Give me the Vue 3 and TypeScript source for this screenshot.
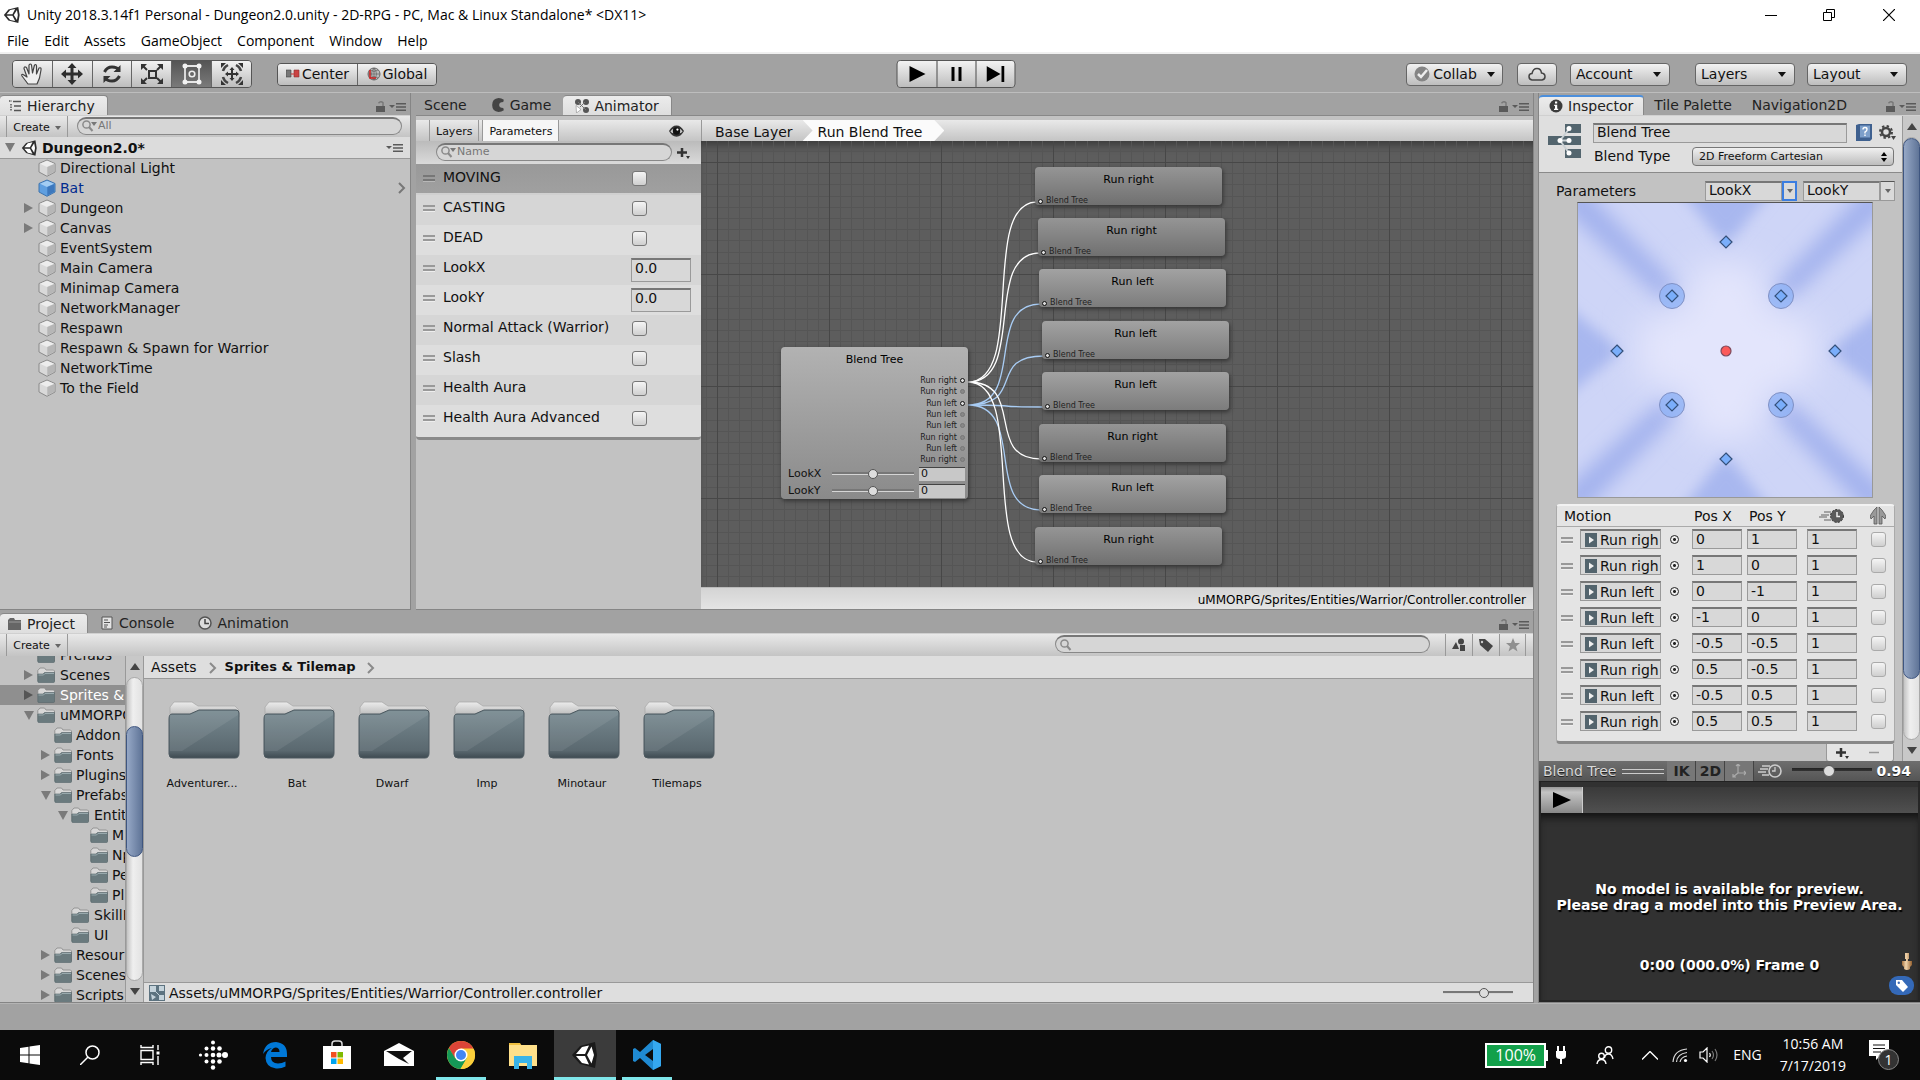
<script setup lang="ts">
interface TreeRow { name: string; level: number; fold?: 'open' | 'closed'; selected?: boolean }
interface SceneRow { name: string; fold?: boolean; prefab?: boolean }
interface Param { name: string; kind: 'bool' | 'float' }
interface GraphNode { label: string; x: number; y: number; left: boolean }
interface Motion { name: string; x: string; y: string }

const menus = ['File', 'Edit', 'Assets', 'GameObject', 'Component', 'Window', 'Help']
const tools = ['hand', 'move', 'rotate', 'scale', 'rect', 'transform']

const sceneRows: SceneRow[] = [
  { name: 'Directional Light' },
  { name: 'Bat', prefab: true },
  { name: 'Dungeon', fold: true },
  { name: 'Canvas', fold: true },
  { name: 'EventSystem' },
  { name: 'Main Camera' },
  { name: 'Minimap Camera' },
  { name: 'NetworkManager' },
  { name: 'Respawn' },
  { name: 'Respawn & Spawn for Warrior' },
  { name: 'NetworkTime' },
  { name: 'To the Field' },
]

const params: Param[] = [
  { name: 'MOVING', kind: 'bool' },
  { name: 'CASTING', kind: 'bool' },
  { name: 'DEAD', kind: 'bool' },
  { name: 'LookX', kind: 'float' },
  { name: 'LookY', kind: 'float' },
  { name: 'Normal Attack (Warrior)', kind: 'bool' },
  { name: 'Slash', kind: 'bool' },
  { name: 'Health Aura', kind: 'bool' },
  { name: 'Health Aura Advanced', kind: 'bool' },
]

// Node positions are in graph-canvas coordinates.
const nodes: GraphNode[] = [
  { label: 'Run right', x: 334, y: 26, left: false },
  { label: 'Run right', x: 337, y: 77, left: false },
  { label: 'Run left', x: 338, y: 128, left: true },
  { label: 'Run left', x: 341, y: 180, left: true },
  { label: 'Run left', x: 341, y: 231, left: true },
  { label: 'Run right', x: 338, y: 283, left: false },
  { label: 'Run left', x: 338, y: 334, left: true },
  { label: 'Run right', x: 334, y: 386, left: false },
]
const outputs = ['Run right', 'Run right', 'Run left', 'Run left', 'Run left', 'Run right', 'Run left', 'Run right']

function wire(n: GraphNode): string {
  const y0 = n.left ? 264 : 241
  const x1 = n.x + 2
  const y1 = n.y + 35
  return `M267 ${y0} C 326 ${y0} ${x1 - 58} ${y1} ${x1} ${y1}`
}

const motions: Motion[] = [
  { name: 'Run righ', x: '0', y: '1' },
  { name: 'Run righ', x: '1', y: '0' },
  { name: 'Run left', x: '0', y: '-1' },
  { name: 'Run left', x: '-1', y: '0' },
  { name: 'Run left', x: '-0.5', y: '-0.5' },
  { name: 'Run righ', x: '0.5', y: '-0.5' },
  { name: 'Run left', x: '-0.5', y: '0.5' },
  { name: 'Run righ', x: '0.5', y: '0.5' },
]
const samples = [
  [148, 39, 0], [39, 148, 0], [257, 148, 0], [148, 256, 0],
  [94, 93, 1], [203, 93, 1], [94, 202, 1], [203, 202, 1],
]

const tree: TreeRow[] = [
  { name: 'Prefabs', level: 1 },
  { name: 'Scenes', level: 1, fold: 'closed' },
  { name: 'Sprites &', level: 1, fold: 'closed', selected: true },
  { name: 'uMMORPG', level: 1, fold: 'open' },
  { name: 'Addon', level: 2 },
  { name: 'Fonts', level: 2, fold: 'closed' },
  { name: 'Plugins', level: 2, fold: 'closed' },
  { name: 'Prefabs', level: 2, fold: 'open' },
  { name: 'Entit', level: 3, fold: 'open' },
  { name: 'M', level: 4 },
  { name: 'Np', level: 4 },
  { name: 'Pe', level: 4 },
  { name: 'Pl', level: 4 },
  { name: 'SkillE', level: 3 },
  { name: 'UI', level: 3 },
  { name: 'Resour', level: 2, fold: 'closed' },
  { name: 'Scenes', level: 2, fold: 'closed' },
  { name: 'Scripts', level: 2, fold: 'closed' },
]
const folders = ['Adventurer...', 'Bat', 'Dwarf', 'Imp', 'Minotaur', 'Tilemaps']
const apps = ['fit', 'edge', 'store', 'mail', 'chrome', 'explorer', 'unityw', 'code']
const running = ['chrome', 'unityw', 'code']
</script>

<template>
  <div class="app">
    <svg class="defs" aria-hidden="true">
      <defs>
        <linearGradient id="gFolder" x1="0" y1="0" x2="0" y2="1"><stop offset="0" stop-color="#778990" /><stop offset="0.85" stop-color="#5a686f" /><stop offset="1" stop-color="#3e4a51" /></linearGradient>
        <linearGradient id="gPaper" x1="0" y1="0" x2="0" y2="1"><stop offset="0" stop-color="#ececec" /><stop offset="1" stop-color="#b4b4b4" /></linearGradient>
        <linearGradient id="gCyl" x1="0" y1="0" x2="1" y2="0"><stop offset="0" stop-color="#a5713f" /><stop offset="0.4" stop-color="#f2d6ae" /><stop offset="1" stop-color="#94602f" /></linearGradient>
        <filter id="edgeSoft" x="-30%" y="-30%" width="160%" height="160%"><feGaussianBlur stdDeviation="7" /></filter>
        <filter id="soft" x="-30%" y="-30%" width="160%" height="160%"><feGaussianBlur stdDeviation="10" /></filter>
        <filter id="softer" x="-50%" y="-50%" width="200%" height="200%"><feGaussianBlur stdDeviation="16" /></filter>
      </defs>
      <symbol id="unity" viewBox="0 0 20 20"><path fill="#2b2b2b" d="M1 10 6 4 17 1 18.500 10 17 19 6 16z" /><path fill="#fff" d="M4 9.200 8 4.500 13.500 3.300 10.500 9.200zM4 10.800 8 15.500 13.500 16.700 10.500 10.800zM12 10 15.500 4.500 16.500 10 15.500 15.500z" /></symbol>
      <symbol id="unityw" viewBox="0 0 30 30"><path fill="#1a1a1a" d="M2 15 10 6 25 2 27 15 25 28 10 24z" /><path fill="#fff" d="M6 14 12 7 19 5.500 15 14zM6 16 12 23 19 24.500 15 16zM17 15 21.500 6.500 24 15 21.500 23.500z" /></symbol>
      <symbol id="lock" viewBox="0 0 10 12"><path fill="#5a5a5a" d="M0 5h9v6H0z" /><path fill="none" stroke="#777" stroke-width="1.400" d="M2.500 2.200Q4.500-.2 7 1.600V5" /></symbol>
      <symbol id="opts" viewBox="0 0 18 10"><path fill="#5a5a5a" d="M0 3h6L3 6zM7 1h10v1.500H7zM7 4.200h10v1.500H7zM7 7.500h10V9H7z" /></symbol>
      <symbol id="list" viewBox="0 0 14 12"><path stroke="#555" stroke-width="1.500" stroke-dasharray="1.500 1" fill="none" d="M1 1h3M3 4v7" /><path stroke="#555" stroke-width="1.600" d="M5 1.500h8M6 6h7M6 10.500h7" /></symbol>
      <symbol id="pac" viewBox="0 0 12 12"><path fill="#444" d="M11 1.500Q9 0 6.500 0 1 .5 1 6T6.500 12Q9 12 11 10.500L10.500 8.500Q7 8.500 7 6T10.500 3.500z" /></symbol>
      <symbol id="anim" viewBox="0 0 14 14"><g fill="#555"><circle cx="3" cy="3" r="3" /><circle cx="11" cy="3" r="3" /><circle cx="11" cy="11" r="3" /></g><path fill="#777" d="M3 3 11 11M10 3 5 8" stroke="#777" /><path fill="#fff" stroke="#888" stroke-width=".6" d="M1 6.500 6 10.500 1.500 14z" /></symbol>
      <symbol id="info" viewBox="0 0 14 14"><circle cx="7" cy="7" r="6.500" fill="#3c3c3c" /><path fill="#fff" d="M6 2.500h2.200v2H6zM5.200 5.700h3v4h1V11H5V9.700h1V7h-.8z" /></symbol>
      <symbol id="mag" viewBox="0 0 16 12"><circle cx="4.500" cy="4.500" r="3.600" fill="none" stroke="#8a8a8a" stroke-width="1.500" /><path stroke="#8a8a8a" stroke-width="2" d="m7 7 3.500 4" /></symbol>
      <symbol id="magd" viewBox="0 0 16 12"><circle cx="4.500" cy="4.500" r="3.600" fill="none" stroke="#8a8a8a" stroke-width="1.500" /><path stroke="#8a8a8a" stroke-width="2" d="m7 7 3.500 4" /><path fill="#777" d="M9 2h6l-3 4z" /></symbol>
      <symbol id="cube" viewBox="0 0 18 18"><path fill="#d9d9d9" stroke="#8b8b8b" d="M9 1 17 4.500V13L9 17.300 1 13V4.500z" /><path fill="#ededed" d="M9 1.800 16 4.800 9 8 2 4.800z" /><path fill="#b6b6b6" d="M9.300 8 16.300 5V12.700L9.300 16.500z" /></symbol>
      <symbol id="cubeb" viewBox="0 0 18 18"><path fill="#5f9fe0" stroke="#3f74ad" d="M9 1 17 4.500V13L9 17.300 1 13V4.500z" /><path fill="#a3cdf3" d="M9 1.800 16 4.800 9 8 2 4.800z" /><path fill="#3d78bd" d="M9.300 8 16.300 5V12.700L9.300 16.500z" /></symbol>
      <symbol id="fold" viewBox="0 0 18 16"><path fill="#d8d8d8" stroke="#888" stroke-width=".8" d="M.8 14V3.500L3 1h4.500L9 3h7.500l1 1V14z" /><path fill="#6a7a7e" stroke="#56646a" stroke-width=".6" d="M.8 7H6l1.500-1.500h10V14.500q0 1-1 1H1.800q-1 0-1-1z" /><path stroke="#a5b5b9" stroke-width=".8" fill="none" d="M1.500 8H6.500L8 6.500H17" /></symbol>
      <symbol id="folder" viewBox="0 0 72 58"><path fill="url(#gPaper)" stroke="#aaa" stroke-width=".8" d="M2 14V6L6 1H24L30 5H67L71 9V16H2z" /><path fill="url(#gFolder)" stroke="#4c5960" d="M1 18Q1 13 4 13H22L31 9H68Q71 9 71 12V52Q71 57 67 57H5Q1 57 1 53z" /><path fill="#fff" opacity=".08" d="M2 14H22L31 10H70V14L14 50H2z" /></symbol>
      <symbol id="hand" viewBox="0 0 26 24"><path fill="#eee" stroke="#444" stroke-width="1.200" stroke-linejoin="round" d="M9 22 3 14Q2 12 4 12.500L8 15 5 6.500Q5 4 7.500 5.500L10 12 10 3Q11.500 1 12.500 3L13.500 11 15.500 3Q17.500 2 17.500 4L17.500 12 20 6Q22.500 5 22 8L20.500 16 18 22z" /></symbol>
      <symbol id="move" viewBox="0 0 26 24"><path fill="#2d2d2d" d="m13 1 4.500 5h-3v4.500H19v-3l5 4.500-5 4.500v-3h-4.500V18h3L13 23l-4.500-5h3v-4.500H7v3L2 12l5-4.500v3h4.500V6h-3z" /></symbol>
      <symbol id="rotate" viewBox="0 0 26 24"><path fill="none" stroke="#333" stroke-width="3" d="M5.500 10Q8 5 13 5T20 8M20.500 14Q18 19 13 19T6 16" /><path fill="#333" d="M21.500 3v7h-7zM4.500 21v-7h7z" /></symbol>
      <symbol id="scale" viewBox="0 0 26 24"><path fill="none" stroke="#333" stroke-width="2" d="M10 9h7v7h-7zM3 3l5 5M23 3l-5 5M3 21l5-5M23 21l-5-5" /><path fill="#333" d="M2 2h6L2 8zM24 2h-6l6 6zM2 22h6l-6-6zM24 22h-6l6-6z" /></symbol>
      <symbol id="rect" viewBox="0 0 26 24"><path fill="none" stroke="#e6e6e6" stroke-width="1.800" d="M6 4h14v16H6z" /><g fill="#f2f2f2"><circle cx="6" cy="4" r="2.500" /><circle cx="20" cy="4" r="2.500" /><circle cx="6" cy="20" r="2.500" /><circle cx="20" cy="20" r="2.500" /></g><circle cx="13" cy="12" r="2.800" fill="none" stroke="#eee" stroke-width="1.600" /></symbol>
      <symbol id="transform" viewBox="0 0 26 24"><path fill="none" stroke="#444" stroke-width="2.500" d="M4 9Q5 5 9 3M17 3Q21 5 22 9M22 15Q21 19 17 21M9 21Q5 19 4 15" /><path fill="#333" d="M2 1h5L2 6zM24 1h-5l5 5zM2 23h5l-5-5zM24 23h-5l5-5zM13 5l2.500 3H14v3h3V9.500l3 2.500-3 2.500V13h-3v3h1.500L13 19l-2.500-3H12v-3H9v1.500L6 12l3-2.500V11h3V8h-1.500z" /></symbol>
      <symbol id="obj" viewBox="0 0 12 14"><path fill="#53646d" d="M0 0h12v14H0z" /><path fill="#f0f0f0" d="M4 3.500 9 7l-5 3.500z" /></symbol>
      <symbol id="slow" viewBox="0 0 26 16"><path stroke="currentColor" stroke-width="1.500" d="M4 3h8M2 6h8M0 9h8M4 12h7" /><circle cx="17" cy="8" r="6" fill="none" stroke="currentColor" stroke-width="1.600" /><path stroke="currentColor" stroke-width="1.300" fill="none" d="M17 4v4h-3" /></symbol>
      <symbol id="speed" viewBox="0 0 26 16"><path stroke="#8d8d8d" stroke-width="1.500" d="M5 4h7M2 7h8M0 9h8M5 12h7" /><circle cx="18" cy="8" r="6.500" fill="#5a5a5a" stroke="#333" stroke-dasharray="2 1.500" /><path stroke="#eee" stroke-width="1.500" fill="none" d="M18 4v4.500h3" /></symbol>
      <symbol id="start" viewBox="0 0 20 20"><path fill="#fff" d="M0 3 8.500 1.700V9.500H0zM9.500 1.500 20 0v9.500H9.500zM0 10.500h8.500v7.800L0 17zM9.500 10.500H20V20L9.500 18.500z" /></symbol>
      <symbol id="find" viewBox="0 0 20 20"><circle cx="12.500" cy="7.500" r="6.500" fill="none" stroke="#fff" stroke-width="1.500" /><path stroke="#fff" stroke-width="1.500" d="M8 12 0 20" /></symbol>
      <symbol id="task" viewBox="0 0 20 20"><path fill="none" stroke="#fff" stroke-width="1.400" d="M1 5.500h12v9H1zM1 0v2.500h12V0M1 20v-2.500h12V20M18 0v5M18 11v9" /><path fill="#fff" d="M16.500 6.500h3v3h-3z" /></symbol>
      <symbol id="fit" viewBox="0 0 30 30"><g fill="#fff"><circle cx="15" cy="2.500" r="2" /><circle cx="8.500" cy="8.500" r="2" /><circle cx="15" cy="8.500" r="2.200" /><circle cx="21.500" cy="8.500" r="2.300" /><circle cx="2.500" cy="15" r="1.600" /><circle cx="8.500" cy="15" r="2" /><circle cx="15" cy="15" r="2.300" /><circle cx="21" cy="15" r="2.500" /><circle cx="27" cy="15" r="3" /><circle cx="8.500" cy="21.500" r="2" /><circle cx="15" cy="21.500" r="2.200" /><circle cx="21.500" cy="21.500" r="2.300" /><circle cx="15" cy="27.500" r="2.200" /></g></symbol>
      <symbol id="edge" viewBox="0 0 30 30"><path fill="#0078d7" d="M3 14Q5 2 16 2 27 3 27 14V17H11Q11 23 18 23.500 22 23.500 25.500 21.500V26.500Q21 29 16 28.500 6 27.500 5.500 18 6 11 12 8 6.500 9 3 14zM11 12H19.500Q19.500 7.500 15.500 7.500 12 8 11 12z" /></symbol>
      <symbol id="store" viewBox="0 0 30 30"><path fill="none" stroke="#ddd" stroke-width="1.500" d="M10 8V4q0-3 3-3h4q3 0 3 3v4" /><path fill="#fff" d="M1 6h28v23H1z" /><path fill="#f25022" d="M9 12h5.500v5.500H9z" /><path fill="#7fba00" d="M15.500 12H21v5.500h-5.500z" /><path fill="#00a4ef" d="M9 18.500h5.500V24H9z" /><path fill="#ffb900" d="M15.500 18.500H21V24h-5.500z" /></symbol>
      <symbol id="mail" viewBox="0 0 30 30"><path fill="#fff" d="M0 11 15 3l15 8v15H0z" /><path fill="#111" d="M2 11h26l-9 7 6 6-10-5z" /></symbol>
      <symbol id="chrome" viewBox="0 0 30 30"><circle cx="15" cy="15" r="14" fill="#fbcf3b" /><path fill="#db4437" d="M2.900 8A14 14 0 0 1 27.500 8.500H15L8.500 18z" /><path fill="#159957" d="M2.900 8A14 14 0 0 0 14.500 29L21 18 15 21 9 18z" /><path fill="#fbcf3b" d="M15 9h12.700A14 14 0 0 1 14.500 29L21 18z" /><circle cx="15" cy="15" r="6.500" fill="#fff" /><circle cx="15" cy="15" r="5" fill="#4285f4" /></symbol>
      <symbol id="explorer" viewBox="0 0 30 30"><path fill="#f0c040" d="M1 3h11l2 3H1z" /><path fill="#ffe08a" d="M1 5h28v21H1z" /><path fill="#3ab4e8" d="M6 16h18v13h-5v-6h-8v6H6z" /></symbol>
      <symbol id="code" viewBox="0 0 30 30"><path fill="#1f8ad2" d="M21 0 29 4V26L21 30 8 18 3 22 1 21V9L3 8 8 12zM21 9 13 15l8 6z" /><path fill="#35a8f0" d="m21 0 8 4v22l-8 4z" /></symbol>
    </svg>

    <header class="titlebar">
      <svg class="logo"><use href="#unity" /></svg>
      <span class="title">Unity 2018.3.14f1 Personal - Dungeon2.0.unity - 2D-RPG - PC, Mac &amp; Linux Standalone* &lt;DX11&gt;</span>
      <div class="winbtns">
        <button aria-label="Minimize"><svg viewBox="0 0 12 12"><path stroke="#000" d="M0 6.500h12" /></svg></button>
        <button aria-label="Restore"><svg viewBox="0 0 12 12"><path fill="none" stroke="#000" d="M.5 3.500h8v8h-8zM3.500 3V.5h8v8H9" /></svg></button>
        <button aria-label="Close"><svg viewBox="0 0 12 12"><path stroke="#000" stroke-width="1.200" d="m0 0 12 12M12 0 0 12" /></svg></button>
      </div>
    </header>
    <nav class="menubar"><a v-for="m in menus" :key="m" href="#">{{ m }}</a></nav>

    <div class="toolbar">
      <div class="seg tools">
        <button v-for="t in tools" :key="t" :class="{ on: t === 'rect' }" :aria-label="t"><svg><use :href="'#' + t" /></svg></button>
      </div>
      <div class="seg pivot">
        <button><svg viewBox="0 0 14 12"><path fill="#777" d="M0 2h5v7H0z" stroke="#444" stroke-width=".6" /><path fill="#c44" d="M8 2h5v7H8z" stroke="#833" stroke-width=".6" /><path stroke="#c33" d="M5 6h3" /></svg>Center</button>
        <button><svg viewBox="0 0 14 14"><circle cx="7" cy="7" r="6" fill="#bbb" stroke="#666" /><path fill="none" stroke="#666" stroke-width=".7" d="M7 1v12M1 7h12M3 3q4 3 8 0M3 11q4-3 8 0M7 1Q2 7 7 13 12 7 7 1" /><path fill="none" stroke="#c22" stroke-width="1.600" d="M3 3v8h6" /></svg>Global</button>
      </div>
      <div class="seg play">
        <button aria-label="Play"><svg viewBox="0 0 18 16"><path d="m1 0 16 8L1 16z" /></svg></button>
        <button aria-label="Pause"><svg viewBox="0 0 18 16"><path d="M4 1h3v14H4zM11 1h3v14h-3z" /></svg></button>
        <button aria-label="Step"><svg viewBox="0 0 18 16"><path d="m0 0 14 8L0 16zM15 0h3v16h-3z" /></svg></button>
      </div>
      <div class="right-tools">
        <button class="btn collab"><svg viewBox="0 0 16 16"><circle cx="8" cy="8" r="7.500" fill="#858585" /><path fill="none" stroke="#eee" stroke-width="2.500" d="m4 8 3 3 6-7" /></svg>Collab<i class="caret"></i></button>
        <button class="btn cloud" aria-label="Cloud"><svg viewBox="0 0 18 14"><path fill="none" stroke="#444" stroke-width="1.500" d="M4 13Q1 12.500 1 9.500T4 6.500Q5 1.500 9 1.500T13.500 6Q17 6.500 17 9.500T14 13z" /></svg></button>
        <button class="btn menu">Account<i class="caret"></i></button>
        <button class="btn menu layers">Layers<i class="caret"></i></button>
        <button class="btn menu">Layout<i class="caret"></i></button>
      </div>
    </div>

    <main class="work">
      <div class="left">
        <div class="upper">
          <section class="panel hierarchy">
            <div class="tabs">
              <button class="tab on"><svg><use href="#list" /></svg>Hierarchy</button>
              <span class="corner"><svg class="lock"><use href="#lock" /></svg><svg class="opts"><use href="#opts" /></svg></span>
            </div>
            <div class="bar">
              <button class="create">Create<i class="caret sm"></i></button>
              <label class="search"><svg><use href="#magd" /></svg><input type="text" placeholder="All" aria-label="Search hierarchy"></label>
            </div>
            <div class="scene"><i class="tri open"></i><svg class="logo"><use href="#unity" /></svg><b>Dungeon2.0*</b><svg class="opts"><use href="#opts" /></svg></div>
            <ul class="objects">
              <li v-for="r in sceneRows" :key="r.name" :class="{ prefab: r.prefab }">
                <i class="tri" :class="{ none: !r.fold }"></i>
                <svg class="cube"><use :href="r.prefab ? '#cubeb' : '#cube'" /></svg>
                <span>{{ r.name }}</span>
                <svg v-if="r.prefab" class="chev" viewBox="0 0 8 12"><path fill="none" stroke="#777" stroke-width="2" d="m1 1 5 5-5 5" /></svg>
              </li>
            </ul>
          </section>

          <section class="panel animator">
            <div class="tabs">
              <button class="tab">Scene</button>
              <button class="tab"><svg><use href="#pac" /></svg>Game</button>
              <button class="tab on"><svg><use href="#anim" /></svg>Animator</button>
              <span class="corner"><svg class="lock"><use href="#lock" /></svg><svg class="opts"><use href="#opts" /></svg></span>
            </div>
            <div class="anim-body">
              <div class="params">
                <div class="bar ptabs">
                  <button>Layers</button><button class="on">Parameters</button>
                  <svg class="eye" viewBox="0 0 16 12"><path fill="#333" d="M0 6Q3 0 8 0t8 6q-3 6-8 6T0 6z" /><circle cx="8" cy="6" r="4" fill="#111" /><path fill="#ccc" d="M1.500 6.500Q3 4 4.500 3.500 3.500 6 4.500 8.500 3 8 1.500 6.500zM14.500 6.500Q13 4 11.500 3.500 12.500 6 11.500 8.500 13 8 14.500 6.500z" /><circle cx="9" cy="4.500" r="1.200" fill="#fff" /></svg>
                </div>
                <div class="bar psearch">
                  <label class="search"><svg><use href="#magd" /></svg><input type="text" placeholder="Name" aria-label="Search parameters"></label>
                  <button class="plus" aria-label="Add parameter"><svg viewBox="0 0 14 12"><path stroke="#333" stroke-width="2.500" d="M5 1v9M0 5.500h10" /><path fill="#333" d="M9 9h4l-2 3z" /></svg></button>
                </div>
                <div class="plist">
                  <label v-for="(p, i) in params" :key="p.name" class="prow" :class="{ picked: i === 0 }">
                    <i class="grip"></i><span>{{ p.name }}</span>
                    <input v-if="p.kind === 'bool'" type="checkbox">
                    <input v-else type="text" class="field" value="0.0">
                  </label>
                </div>
              </div>
              <div class="graph">
                <div class="bar crumbs"><button class="crumb">Base Layer</button><button class="crumb on">Run Blend Tree</button></div>
                <div class="canvas">
                  <svg class="grid">
                    <defs>
                      <pattern id="gridp" width="112" height="112" x="16" y="21" patternUnits="userSpaceOnUse">
                        <path fill="none" stroke="#555" d="M11.500 0v112M22.500 0v112M34.500 0v112M45.500 0v112M56.500 0v112M67.500 0v112M78.500 0v112M90.500 0v112M101.500 0v112M0 11.500h112M0 22.500h112M0 34.500h112M0 45.500h112M0 56.500h112M0 67.500h112M0 78.500h112M0 90.500h112M0 101.500h112" />
                        <path fill="none" stroke="#474747" d="M.5 0v112M0 .5h112" />
                      </pattern>
                    </defs>
                    <rect width="100%" height="100%" fill="url(#gridp)" />
                    <path v-for="(n, i) in nodes" :key="i" :d="wire(n)" fill="none" :stroke="n.left ? '#a9cdf5' : '#fff'" stroke-width="1.300" />
                  </svg>
                  <div class="node root">
                    <h4>Blend Tree</h4>
                    <div v-for="(o, i) in outputs" :key="i" class="out">{{ o }}<i class="port" :class="{ off: i !== 0 && i !== 2 }"></i></div>
                    <label v-for="a in ['LookX', 'LookY']" :key="a" class="axis"><span>{{ a }}</span><input type="range" :aria-label="a + ' slider'"><input type="text" value="0"></label>
                  </div>
                  <div v-for="(n, i) in nodes" :key="'n' + i" class="node leaf" :class="{ lite: n.left }" :style="{ left: n.x + 'px', top: n.y + 'px' }">
                    <h4>{{ n.label }}</h4>
                    <div class="in"><i class="port"></i>Blend Tree</div>
                  </div>
                </div>
                <div class="path">uMMORPG/Sprites/Entities/Warrior/Controller.controller</div>
              </div>
            </div>
          </section>
        </div>

        <section class="panel project">
          <div class="tabs">
            <button class="tab on"><svg viewBox="0 0 14 12"><path fill="#666" d="M0 12V2l2-2h4l1 2h6v10z" /><path stroke="#999" d="M1 4h12" /></svg>Project</button>
            <button class="tab"><svg viewBox="0 0 12 14"><path fill="#e4e4e4" stroke="#555" d="M1 1h10v12H1z" /><path stroke="#555" stroke-width="1.200" d="M3 4h4M3 6.500h6M3 9h4M3 11h3" /></svg>Console</button>
            <button class="tab"><svg viewBox="0 0 14 14"><circle cx="7" cy="7" r="6" fill="#ddd" stroke="#555" stroke-width="1.500" /><path fill="none" stroke="#444" stroke-width="1.500" d="M7 3v4.500h4" /></svg>Animation</button>
            <span class="corner"><svg class="lock"><use href="#lock" /></svg><svg class="opts"><use href="#opts" /></svg></span>
          </div>
          <div class="bar">
            <button class="create">Create<i class="caret sm"></i></button>
            <label class="search psearchbox"><svg><use href="#mag" /></svg><input type="text" aria-label="Search project"></label>
            <button class="sq" aria-label="Filter by type"><svg viewBox="0 0 14 14"><path fill="#444" d="m0 11 4-7 3 7zM8 7h5v6H8z" /><circle cx="9" cy="3.500" r="3" fill="#444" /></svg></button>
            <button class="sq" aria-label="Filter by label"><svg viewBox="0 0 14 14"><path fill="#444" d="M0 1h6l8 7-5 6-8-7z" /><circle cx="3" cy="4" r="1.200" fill="#ccc" /></svg></button>
            <button class="sq" aria-label="Save search"><svg viewBox="0 0 14 14"><path fill="#8f8f8f" d="m7 0 2 5h5l-4 3.500 1.500 5L7 10.500l-4.500 3 1.500-5L0 5h5z" /></svg></button>
          </div>
          <div class="proj-body">
            <div class="tree">
              <ul>
                <li v-for="(r, i) in tree" :key="i" :class="['lv' + r.level, { picked: r.selected }]">
                  <i class="tri" :class="{ none: !r.fold, open: r.fold === 'open' }"></i>
                  <svg class="fold"><use href="#fold" /></svg><span>{{ r.name }}</span>
                </li>
              </ul>
            </div>
            <div class="scroll"><i class="up"></i><div class="track"><div class="thumb t1"></div></div><i class="down"></i></div>
            <div class="assets">
              <div class="asset-crumbs"><a href="#">Assets</a><svg viewBox="0 0 8 12"><path fill="none" stroke="#8a8a8a" stroke-width="2" d="m1 1 5 5-5 5" /></svg><b>Sprites &amp; Tilemap</b><svg viewBox="0 0 8 12"><path fill="none" stroke="#8a8a8a" stroke-width="2" d="m1 1 5 5-5 5" /></svg></div>
              <div class="asset-grid">
                <figure v-for="f in folders" :key="f"><svg><use href="#folder" /></svg><figcaption>{{ f }}</figcaption></figure>
              </div>
              <div class="asset-foot">
                <svg viewBox="0 0 16 16"><path fill="#5d7380" d="M0 0h16v16H0z" /><path fill="#c5d3db" d="M1 1h6v6H1zM10 1h5v5h-5zM10 10h5v5h-5zM2 9l5 3-4 3z" /><path stroke="#c5d3db" d="m4 4 8 8" /></svg>
                <span>Assets/uMMORPG/Sprites/Entities/Warrior/Controller.controller</span>
                <input type="range" aria-label="Icon size" value="60">
              </div>
            </div>
          </div>
        </section>
      </div>

      <section class="panel inspector">
        <div class="tabs">
          <button class="tab on focus"><svg><use href="#info" /></svg>Inspector</button>
          <button class="tab">Tile Palette</button>
          <button class="tab">Navigation2D</button>
          <span class="corner"><svg class="lock"><use href="#lock" /></svg><svg class="opts"><use href="#opts" /></svg></span>
        </div>
        <div class="insp-body">
          <div class="insp-main">
            <div class="insp-head">
              <svg class="bt" viewBox="0 0 34 34"><g fill="#53656e"><path d="M17 0h16v9H17zM0 12h33v9H0zM17 25h16v9H17z" /></g><path fill="none" stroke="#c9d0d4" stroke-width="2" d="M12 16.500 21 5M12 16.500h9M12 16.500 21 29" /><g fill="#fff"><circle cx="12" cy="16.500" r="2.500" /><circle cx="21" cy="4.500" r="2.500" /><circle cx="21" cy="16.500" r="2.500" /><circle cx="21" cy="29" r="2.500" /></g></svg>
              <div class="insp-fields">
                <div class="line">
                  <input type="text" class="field name" value="Blend Tree" aria-label="Name">
                  <svg class="help" viewBox="0 0 16 17"><path fill="#3e608f" d="M0 1 3 0h13v15l-2 2H0z" /><path fill="#7d9fca" d="M4 1.500h10v12H4z" /><path fill="none" stroke="#fff" stroke-width="1.400" d="M7 5.500q0-2 2-2t2 1.700T9 8v1.500M9 10.500V12" /></svg>
                  <svg class="gear" viewBox="0 0 18 16"><circle cx="7" cy="7" r="4" fill="none" stroke="#444" stroke-width="2.500" /><circle cx="7" cy="7" r="6" fill="none" stroke="#444" stroke-width="2" stroke-dasharray="2.400 2.300" /><path fill="#444" d="M12 11h5l-2.500 4z" /></svg>
                </div>
                <div class="line">
                  <label for="btype">Blend Type</label>
                  <div class="combo"><select id="btype"><option>2D Freeform Cartesian</option></select><svg viewBox="0 0 6 10"><path d="m3 0 3 4H0zM3 10 0 6h6z" /></svg></div>
                </div>
              </div>
            </div>
            <div class="pline">
              <label for="px">Parameters</label>
              <input id="px" type="text" class="field" value="LookX"><button class="dd focus" aria-label="Choose X parameter"><i class="caret sm"></i></button>
              <input type="text" class="field py" value="LookY" aria-label="Parameter Y"><button class="dd" aria-label="Choose Y parameter"><i class="caret sm"></i></button>
            </div>
            <svg class="map" viewBox="0 0 294 294">
              <rect width="294" height="294" fill="#ced5f7" />
              <g filter="url(#edgeSoft)" fill="#a8b7ef">
                <path d="M92-25h112L148 44zM92 321h112L148 250zM-25 92v112L44 148zM321 92v112L250 148z" />
              </g>
              <g filter="url(#soft)" fill="#a0b0ed">
                <path d="M-20 0 0-20 102 86 88 100zM314 0 294-20 194 86 207 100zM-20 294 0 314 102 208 88 194zM314 294 294 314 194 208 207 194z" />
              </g>
              <path filter="url(#softer)" fill="#e3e5fc" d="M118 60h60l10 48 48 10v60l-48 10-10 48h-60l-10-48-48-10v-60l48-10z" />
              <g v-for="(s, i) in samples" :key="i">
                <circle v-if="s[2]" :cx="s[0]" :cy="s[1]" r="12.500" fill="#8fb2f5" fill-opacity=".8" stroke="#7f90c4" />
                <path :transform="`translate(${s[0]} ${s[1]})`" fill="#7aaefb" stroke="#34507a" stroke-width="1.200" d="M0-6 6 0 0 6-6 0z" />
              </g>
              <circle cx="148" cy="148" r="5" fill="#fb5a5a" stroke="#7d4a5c" stroke-width="1.200" />
            </svg>
            <div class="motions">
              <table>
                <colgroup><col class="w0"><col class="w1"><col class="w2"><col class="w3"><col class="w3"><col class="w5"><col></colgroup>
                <thead><tr><th colspan="3">Motion</th><th>Pos X</th><th>Pos Y</th><th class="ic"><svg class="spd"><use href="#speed" /></svg></th><th class="ic"><svg class="mir" viewBox="0 0 16 18"><path fill="#999" stroke="#555" stroke-width=".8" d="M7 0 4 3 0 9l1 3 3-3v8h3zM9 0l3 3 4 6-1 3-3-3v8H9z" /></svg></th></tr></thead>
                <tbody>
                  <tr v-for="(m, i) in motions" :key="i">
                    <td class="c0"><i class="grip"></i></td>
                    <td><div class="objf"><svg><use href="#obj" /></svg><span>{{ m.name }}</span></div></td>
                    <td><button class="pick" aria-label="Pick motion"></button></td>
                    <td><input type="text" class="field" :value="m.x" aria-label="Pos X"></td>
                    <td><input type="text" class="field" :value="m.y" aria-label="Pos Y"></td>
                    <td class="c5"><input type="text" class="field" value="1" aria-label="Speed"></td>
                    <td class="c6"><input type="checkbox" aria-label="Mirror"></td>
                  </tr>
                </tbody>
              </table>
            </div>
            <div class="addrem">
              <button aria-label="Add motion"><svg viewBox="0 0 14 12"><path stroke="#333" stroke-width="2.500" d="M5 1v9M0 5.500h10" /><path fill="#333" d="M9 9h4l-2 3z" /></svg></button>
              <button aria-label="Remove motion"><svg viewBox="0 0 14 12"><path stroke="#999" stroke-width="1.500" d="M2 5.500h10" /></svg></button>
            </div>
          </div>
          <div class="scroll"><i class="up"></i><div class="track"><div class="thumb t2"></div></div><i class="down"></i></div>
        </div>
        <div class="preview">
          <div class="pv-head">
            <span>Blend Tree</span><i class="lines"></i>
            <button>IK</button><button>2D</button>
            <button aria-label="Pivot"><svg viewBox="0 0 14 14"><path fill="none" stroke="#aaa" stroke-width="1.200" d="M6 0v9h8M6 9l-5 4M4 2l2-2 2 2M12 7l2 2-2 2M1 10v3h3" /></svg></button>
            <svg class="slow"><use href="#slow" /></svg>
            <input type="range" aria-label="Playback speed" value="45"><b>0.94</b>
          </div>
          <div class="pv-bar"><button aria-label="Play preview"><svg viewBox="0 0 18 16"><path d="m0 0 18 8L0 16z" /></svg></button></div>
          <div class="pv-view">
            <p>No model is available for preview.<br>Please drag a model into this Preview Area.</p>
            <p class="time">0:00 (000.0%) Frame 0</p>
            <svg class="avatar" viewBox="0 0 10 17"><path fill="url(#gCyl)" d="M3 0h4v6h-1v2h4v4l-2 2v2q-3 2-6 0v-2L0 12V8h4V6H3z" /></svg>
            <button class="tag" aria-label="Labels"><svg viewBox="0 0 12 12"><path fill="#fff" d="M0 0h6l6 7-5 5-7-7z" /><circle cx="2.800" cy="2.800" r="1.200" fill="#3a6ab8" /></svg></button>
          </div>
        </div>
      </section>
    </main>
    <div class="status"></div>

    <footer class="taskbar">
      <button v-for="s in ['start', 'find', 'task']" :key="s" class="sys" :aria-label="s"><svg><use :href="'#' + s" /></svg></button>
      <button v-for="a in apps" :key="a" class="app-ic" :class="{ run: running.includes(a), act: a === 'unityw' }" :aria-label="a"><svg><use :href="'#' + a" /></svg></button>
      <div class="tray">
        <span class="batt">100%</span>
        <svg class="plug" viewBox="0 0 10 18"><path fill="#fff" d="M1 0h2v5h4V0h2v5h1v5q0 3-4 3v5H4v-5q-4 0-4-3V5h1z" /></svg>
        <svg class="people" viewBox="0 0 18 18"><g fill="none" stroke="#fff" stroke-width="1.400"><circle cx="12.500" cy="4" r="3.200" /><path d="M8.500 12Q9 8 12.500 8T17 13" /><circle cx="5.500" cy="10" r="2.800" /><path d="M1 18q.5-4.500 4.500-4.500T10 18" /></g></svg>
        <svg class="up" viewBox="0 0 16 9"><path fill="none" stroke="#fff" stroke-width="1.400" d="m0 8.500 8-8 8 8" /></svg>
        <svg class="wifi" viewBox="0 0 16 15"><g fill="none" stroke="#ddd" stroke-width="1.200"><path d="M1 14Q2 2 15 1M4.500 14Q5 6 15 4.500M8 14q1-5 7-6" /></g><circle cx="13.500" cy="12.500" r="1.600" fill="#fff" /></svg>
        <svg class="vol" viewBox="0 0 20 16"><path fill="none" stroke="#fff" stroke-width="1.200" d="M1 5h3l4-4v14l-4-4H1zM10.500 6q1.500 2 0 4" /><path fill="none" stroke="#777" stroke-width="1.200" d="M13 4q3 4 0 8M16 2q4 6 0 12" /></svg>
        <span class="lang">ENG</span>
        <span class="clock">10:56 AM<br>7/17/2019</span>
        <span class="note"><svg viewBox="0 0 20 20"><path fill="#fff" d="M0 0h20v16h-9l-4 4v-4H0z" /><path stroke="#111" stroke-width="1.200" d="M4 5h12M4 8.500h12M4 12h8" /></svg><em>1</em></span>
      </div>
    </footer>
  </div>
</template>

<style>
* { box-sizing: border-box; }
body { margin: 0; overflow: hidden; }
</style>

<style scoped>
.app { display: flex; flex-direction: column; height: 100vh; background: #a2a2a2; color: #111; font: 14px/18px "DejaVu Sans", sans-serif; }
.defs { position: absolute; width: 0; height: 0; }
button, input, select { font: inherit; color: inherit; margin: 0; padding: 0; border: 0; background: none; border-radius: 0; outline: 0; min-width: 0; }
button { display: inline-flex; align-items: center; justify-content: center; flex: none; white-space: nowrap; }
svg { flex: none; display: block; }
ul, figure, h4, p { margin: 0; padding: 0; list-style: none; }
a { color: inherit; text-decoration: none; }

.titlebar { display: flex; align-items: center; height: 29px; flex: none; background: #fff; padding-left: 3px; font: 14px/20px "Open Sans", "Noto Sans", sans-serif; color: #000; }
.titlebar .logo { width: 18px; height: 18px; margin-right: 6px; }
.title { flex: 1; white-space: nowrap; }
.winbtns { display: flex; }
.winbtns button { width: 58px; height: 28px; }
.winbtns svg { width: 12px; height: 12px; }
.winbtns button:last-child { width: 62px; }
.menubar { display: flex; gap: 15px; height: 25px; flex: none; background: #fff; border-bottom: 2px solid #f0f0f0; padding-left: 7px; font: 14px/24px "Open Sans", "Noto Sans", sans-serif; color: #000; }

.toolbar { display: flex; align-items: center; height: 39px; flex: none; padding: 2px 13px 0 12px; border-bottom: 1px solid #bdbdbd; position: relative; }
.seg { display: flex; border: 1px solid #555; border-radius: 4px; overflow: hidden; }
.seg button, .btn { background: linear-gradient(#f2f2f2, #bdbdbd); }
.seg button + button { border-left: 1px solid #666; }
.tools { height: 28px; width: 240px; }
.tools button { flex: 1; }
.tools svg { width: 26px; height: 24px; }
.tools .on { background: linear-gradient(#555, #7a7a7a); }
.pivot { margin-left: 25px; height: 23px; }
.pivot button { width: 79px; gap: 2px; }
.pivot svg { width: 14px; height: 14px; }
.play { position: absolute; left: 50%; transform: translateX(-50%); top: 6px; height: 28px; margin-left: -4px; }
.play button { width: 39px; }
.play svg { width: 18px; height: 16px; }
.right-tools { margin-left: auto; display: flex; align-items: center; }
.btn { height: 23px; border: 1px solid #666; border-radius: 4px; }
.caret { border: 4px solid transparent; border-top: 5px solid #111; border-bottom: 0; margin-left: 10px; }
.caret.sm { border-width: 4px 3px 0; border-top-color: #666; margin-left: 5px; }
.collab { width: 97px; }
.collab svg { width: 16px; height: 16px; margin-right: 3px; }
.cloud { width: 40px; margin: 0 13px 0 14px; }
.cloud svg { width: 18px; height: 14px; }
.menu { width: 100px; justify-content: space-between; padding: 0 8px 0 5px; }
.layers { margin: 0 12px 0 25px; }

.work { flex: 1; min-height: 0; display: grid; grid-template-columns: minmax(0, 1fr) 382px; gap: 4px; }
.left { display: grid; grid-template-rows: minmax(0, 518fr) minmax(0, 392fr); min-height: 0; }
.upper { display: grid; grid-template-columns: 411px minmax(0, 1fr); gap: 5px; min-height: 0; padding-bottom: 1px; }
.panel { display: flex; flex-direction: column; min-width: 0; min-height: 0; background: #c2c2c2; border-right: 1px solid #858585; border-bottom: 1px solid #858585; }
.tabs { display: flex; align-items: stretch; height: 23px; flex: none; padding-top: 2px; background: #a2a2a2; border-bottom: 1px solid #d0d0d0; }
.tab { padding: 0 12px; gap: 5px; color: #222; border-radius: 4px 4px 0 0; }
.tab:first-child { padding-left: 8px; }
.tab svg { width: 14px; height: 14px; }
.tab.on { background: linear-gradient(#ececec, #dedede); border-top: 1px solid #888; border-right: 1px solid #888; }
.tab.focus { border-top: 2px solid #4c8fdc; }
.inspector .tab { padding-right: 10px; padding-left: 10px; }
.corner { margin-left: auto; display: flex; align-items: center; gap: 3px; padding: 3px 3px 0 0; }
.lock { width: 10px; height: 12px; }
.opts { width: 18px; height: 10px; }

.bar { display: flex; align-items: center; height: 21px; flex: none; background: linear-gradient(#e9e9e9, #c4c4c4); }
.create { margin-left: 6px; width: 62px; height: 100%; border: solid #999; border-width: 0 1px; font-size: 11px; padding-top: 2px; }
.search { display: flex; align-items: center; height: 18px; background: #d6d6d6; border: 1px solid #888; border-top: 2px solid #777; border-radius: 9px; flex: 1; min-width: 0; margin: 0 8px 2px 9px; padding-left: 4px; }
.search svg { width: 16px; height: 12px; }
.search input { flex: 1; height: 14px; font-size: 11px; color: #444; }
.search input::placeholder { color: #777; opacity: 1; }
.tri { flex: none; width: 0; height: 0; border: 5px solid transparent; border-left: 9px solid #7a7a7a; border-right: 0; margin-right: 1px; }
.tri.open { border: 5px solid transparent; border-top: 9px solid #7a7a7a; border-bottom: 0; margin-right: 0; }
.tri.none { visibility: hidden; }
.scene { display: flex; align-items: center; height: 22px; flex: none; background: #dcdcdc; border-bottom: 1px solid #999; padding: 0 6px 0 5px; }
.scene .logo { width: 17px; height: 18px; margin: 0 4px 0 6px; }
.scene .opts { margin-left: auto; }
.objects li { display: flex; align-items: center; height: 20px; padding: 0 4px 2px 24px; }
.objects .tri { margin-right: 5px; }
.cube { width: 18px; height: 18px; margin-right: 4px; }
.prefab { color: #002a8f; }
.chev { width: 8px; height: 12px; margin-left: auto; }

.animator .tabs { border-bottom-color: #888; }
.anim-body { flex: 1; min-height: 0; display: flex; padding-top: 4px; }
.params { width: 285px; flex: none; }
.ptabs { padding-left: 13px; font-size: 11px; }
.ptabs button { height: 100%; border: solid #999; border-width: 0 1px; padding: 2px 6px 0; margin-right: 3px; }
.ptabs .on { background: #f6f6f6; }
.eye { width: 15px; height: 12px; margin: 0 17px 0 auto; }
.psearch { height: 24px; background: linear-gradient(#bbb, #dadada); border-bottom: 1px solid #999; }
.psearch .search { margin: 0 5px 2px 20px; }
.plus svg { width: 14px; height: 12px; }
.plus { margin-right: 10px; }
.plist { background: #dedede; border-bottom: 3px solid #8a8a8a; border-radius: 0 0 4px 4px; padding-bottom: 2px; }
.prow { display: flex; align-items: flex-start; height: 30px; padding: 3px 10px 0 7px; }
.prow:nth-child(even) { background: #d6d6d6; }
.prow.picked { background: linear-gradient(#999, #a0a0a0); border-bottom: 2px solid #d0d0d0; }
.grip { width: 12px; height: 6px; border: solid #999; border-width: 2px 0; box-shadow: 0 1px #eee; margin: 7px 8px 0 0; flex: none; }
.picked .grip { border-color: #777; box-shadow: 0 1px #b8b8b8; }
.prow span { flex: 1; }
.prow input { flex: none; }
input[type="checkbox"] { appearance: none; width: 15px; height: 15px; border: 1px solid #777; border-radius: 3px; background: linear-gradient(#f5f5f5, #cfcfcf); }
.prow input[type="checkbox"] { margin: 3px 44px 0 0; }
.field { border: 1px solid #9a9a9a; border-top: 2px solid #777; background: #d8d8d8; padding: 0 3px 2px; }
.prow .field { width: 60px; height: 24px; padding-bottom: 6px; }

.graph { flex: 1; min-width: 0; display: flex; flex-direction: column; }
.crumbs { border-left: 1px solid #999; }
.crumb { height: 21px; padding: 2px 20px 0 13px; }
.crumb.on { background: #fbfbfb; clip-path: polygon(0 0, calc(100% - 10px) 0, 100% 50%, calc(100% - 10px) 100%, 0 100%, 10px 50%); padding: 2px 22px 0 15px; margin-left: -10px; }
.canvas { position: relative; flex: 1; min-height: 0; overflow: hidden; background: #5d5d5d; box-shadow: inset 0 8px 8px -4px #3a3a3a; }
.grid { width: 100%; height: 100%; position: absolute; inset: 0; }
.node { position: absolute; width: 187px; border-radius: 4px; background: linear-gradient(#959595, #707070); box-shadow: 1px 2px 4px #333; }
.node.lite { background: linear-gradient(#a2a2a2, #7c7c7c); }
.node h4 { font: 11px/14px "DejaVu Sans", sans-serif; text-align: center; color: #000; }
.leaf { height: 38px; padding-top: 6px; }
.leaf .in { display: flex; align-items: center; font-size: 8px; line-height: 10px; margin-top: 9px; padding-left: 3px; gap: 3px; color: #222; }
.port { width: 5px; height: 5px; border: 1px solid #111; border-radius: 50%; background: #ddd; flex: none; }
.port.off { border-color: #777; background: #888; }
.root { left: 80px; top: 206px; height: 152px; padding: 6px 3px; background: linear-gradient(#b2b2b2, #8a8a8a); }
.root h4 { margin-bottom: 8px; }
.out { display: flex; justify-content: flex-end; align-items: center; gap: 3px; font-size: 8px; line-height: 11px; height: 11px; color: #222; }
.out:nth-of-type(3n) { height: 12px; }
.axis { display: flex; align-items: center; height: 17px; font-size: 11px; padding-left: 4px; }
.axis span { width: 44px; }
.axis input[type="range"] { width: 82px; }
.axis input[type="text"] { width: 46px; height: 14px; background: #c8c8c8; border-top: 1px solid #444; margin-left: 5px; padding-left: 2px; font-size: 11px; }
input[type="range"] { appearance: none; height: 10px; background: linear-gradient(transparent 3px, #777 3px, #777 5px, #d5d5d5 5px, #d5d5d5 6px, transparent 6px); }
input[type="range"]::-webkit-slider-thumb { appearance: none; width: 10px; height: 10px; border-radius: 50%; border: 1px solid #555; background: #ddd; }
.path { height: 22px; flex: none; background: linear-gradient(#d4d4d4, #e4e4e4); border-top: 1px solid #bbb; text-align: right; font-size: 12px; line-height: 24px; padding-right: 7px; color: #000; }

.project .bar { height: 22px; }
.psearchbox { flex: none; width: 375px; margin-left: auto; margin-right: 15px; }
.sq { width: 27px; height: 100%; border-left: 1px solid #999; }
.sq svg { width: 14px; height: 14px; }
.sq:last-child { border-right: 1px solid #999; margin-right: 7px; }
.proj-body { flex: 1; min-height: 0; display: flex; }
.tree { width: 125px; flex: none; overflow: hidden; }
.tree ul { margin-top: -11px; }
.tree li { display: flex; align-items: center; height: 20px; white-space: nowrap; }
.tree .tri { width: 0; margin-right: 4px; }
.tree .tri.open { margin-right: 3px; }
.tree li.picked { background: #8f8f8f; color: #fff; }
.picked .tri { border-left-color: #555; }
.lv1 { padding-left: 24px; }
.lv2 { padding-left: 41px; }
.lv3 { padding-left: 58px; }
.lv4 { padding-left: 77px; }
.fold { width: 18px; height: 16px; margin-right: 5px; }
.lv2 .fold, .lv4 .fold { margin-right: 4px; }
.scroll { width: 18px; flex: none; display: flex; flex-direction: column; align-items: center; background: #c8c8c8; border-left: 1px solid #999; }
.scroll .up, .scroll .down { border: 5px solid transparent; margin: 7px 0; flex: none; }
.scroll .up { border-bottom: 7px solid #444; border-top: 0; }
.scroll .down { border-top: 7px solid #444; border-bottom: 0; }
.track { flex: 1; width: 100%; border-radius: 9px; background: linear-gradient(90deg, #c4c4c4, #efefef 40%, #e2e2e2); border: 1px solid #aaa; display: flex; flex-direction: column; min-height: 0; }
.thumb { border: 1px solid #3f5680; border-radius: 9px; background: linear-gradient(90deg, #96a8c6, #5f7497); margin: 0 -1px; }
.t1 { margin-top: 48px; height: 131px; }
.t2 { height: 90%; }
.assets { flex: 1; min-width: 0; display: flex; flex-direction: column; border-left: 1px solid #999; }
.asset-crumbs { display: flex; align-items: center; height: 23px; flex: none; background: #dedede; border-bottom: 1px solid #999; padding-left: 7px; }
.asset-crumbs b { font-size: 13px; }
.asset-crumbs svg { width: 8px; height: 12px; margin: 2px 8px 0 12px; }
.asset-grid { flex: 1; min-height: 0; display: flex; align-items: flex-start; gap: 5px; padding: 22px 13px; }
figure { width: 90px; text-align: center; font-size: 11px; line-height: 14px; }
figure svg { width: 72px; height: 58px; margin: 0 auto 18px 11px; }
.asset-foot { display: flex; align-items: center; gap: 4px; height: 20px; flex: none; background: #dedede; border-top: 1px solid #999; padding: 0 20px 0 5px; }
.asset-foot svg { width: 16px; height: 16px; }
.asset-foot input { width: 70px; margin-left: auto; }

.inspector { border-left: 1px solid #858585; border-right: 0; }
.insp-body { flex: 1; min-height: 0; display: flex; overflow: hidden; }
.insp-main { flex: 1; min-width: 0; }
.insp-head { display: flex; gap: 11px; height: 57px; background: #dfdfdf; border-bottom: 1px solid #8a8a8a; padding: 6px 5px 0 9px; }
.bt { width: 34px; height: 34px; margin-top: 2px; }
.insp-fields { flex: 1; min-width: 0; }
.line { display: flex; align-items: center; height: 21px; }
.name { flex: 1; height: 20px; }
.help { width: 16px; height: 17px; margin: 0 7px 0 9px; }
.gear { width: 18px; height: 16px; }
.line label { width: 99px; padding: 0 0 2px 1px; }
.line + .line { height: 27px; }
.combo { position: relative; }
.line .combo { flex: 1; margin-right: 3px; }
.combo select { appearance: none; width: 100%; height: 19px; font-size: 11px; border: 1px solid #777; border-radius: 4px; background: linear-gradient(#f0f0f0, #bdbdbd); padding-left: 6px; display: block; }
.combo svg { position: absolute; right: 7px; top: 5px; width: 6px; height: 10px; }
.pline { display: flex; align-items: center; padding: 6px 7px 0 17px; height: 29px; }
.pline label { flex: 1; }
.pline .field { width: 77px; height: 20px; }
.dd { width: 15px; height: 20px; border: 1px solid #999; border-top-color: #555; background: #dadada; }
.dd.focus { border: 2px solid #3b7de0; margin-right: 6px; }
.dd .caret { margin: 0; }
.map { width: 296px; height: 296px; margin: 0 auto 6px 38px; border: 1px solid #999; border-top-color: #555; }
.motions { background: #e4e4e4; margin: 0 7px 0 17px; border: 1px solid #aaa; border-top: 2px solid #f2f2f2; border-bottom: 3px solid #888; border-radius: 4px; height: 240px; }
table { border-collapse: collapse; table-layout: fixed; width: 100%; }
.w0 { width: 23px; }
.w1 { width: 85px; }
.w2 { width: 27px; }
.w3 { width: 55px; }
.w5 { width: 60px; }
th { font-weight: 400; text-align: left; height: 20px; padding: 0 0 0 2px; border-bottom: 1px solid #aaa; line-height: 16px; white-space: nowrap; }
th:first-child { padding-left: 7px; }
.ic { padding: 0; }
.ic svg { margin: 0 auto; }
.spd { width: 26px; height: 16px; }
.mir { width: 16px; height: 18px; }
td { height: 26px; padding: 0; vertical-align: middle; }
.c0 { padding-left: 4px; }
.c0 .grip { display: block; margin: 2px 0 0; }
.objf { display: flex; align-items: center; width: 81px; height: 20px; overflow: hidden; border: 1px solid #999; border-top: 2px solid #777; background: #d8d8d8; padding-left: 4px; gap: 3px; white-space: nowrap; }
.objf svg { width: 12px; height: 14px; }
.pick { width: 9px; height: 9px; border: 1px solid #222; border-radius: 50%; margin: 0 0 0 5px; background: radial-gradient(#222 1px, #eee 2px); display: block; }
td .field { width: 50px; height: 20px; display: block; }
.c5 .field { margin-left: 5px; }
.c6 input[type="checkbox"] { display: block; margin: 0 auto; border-color: #aaa; }
.addrem { display: flex; justify-content: space-around; width: 68px; height: 18px; margin-left: 287px; background: #e4e4e4; border: 1px solid #999; border-top: 0; border-radius: 0 0 3px 3px; padding-right: 4px; }
.addrem svg { width: 14px; height: 12px; }

.preview { height: 241px; flex: none; display: flex; flex-direction: column; background: #313131; border: 2px solid #262626; border-top: 0; }
.pv-head { display: flex; align-items: center; height: 21px; flex: none; margin: 0 -2px; background: linear-gradient(#6e6e6e, #555); border-bottom: 1px solid #222; color: #d8d8d8; padding: 0 9px 0 4px; text-shadow: 0 1px #222; }
.lines { flex: 1; height: 5px; border: solid #ccc; border-width: 1px 0; margin: 0 3px 0 5px; }
.pv-head button { width: 29px; height: 100%; border-right: 1px solid #444; background: #777; color: #222; font-weight: 700; text-shadow: none; }
.pv-head button svg { width: 14px; height: 14px; }
.pv-head .slow { width: 26px; height: 16px; margin: 0 8px 0 4px; color: #ccc; }
.pv-head input { width: 80px; margin-right: 4px; background: linear-gradient(transparent 3px, #222 3px, #333 6px, transparent 6px); height: 12px; }
.pv-head input::-webkit-slider-thumb { width: 12px; height: 12px; }
.pv-head b { color: #fff; }
.pv-bar { height: 26px; flex: none; margin-top: 5px; background: linear-gradient(#3a3a3a, #505050); }
.pv-bar button { width: 42px; height: 26px; background: linear-gradient(#999, #c4c4c4 20%, #888); border-right: 1px solid #ccc; }
.pv-bar svg { width: 18px; height: 16px; }
.pv-view { position: relative; flex: 1; color: #fff; font-weight: 700; line-height: 16px; text-align: center; text-shadow: 1px 2px 1px #000; box-shadow: inset 0 8px 8px -4px #111; padding-top: 68px; white-space: nowrap; }
.time { margin-top: 44px; }
.avatar { position: absolute; right: 6px; bottom: 30px; width: 10px; height: 17px; }
.tag { position: absolute; right: 4px; bottom: 5px; width: 25px; height: 19px; border-radius: 9px; background: #3469b8; }
.tag svg { width: 12px; height: 12px; }
.status { height: 27px; flex: none; border-top: 1px solid #b4b4b4; }

.taskbar { display: flex; height: 50px; flex: none; background: #0b0b0b; color: #fff; font: 14px/22px "Open Sans", "Noto Sans", sans-serif; }
.sys { width: 60px; }
.sys svg { width: 20px; height: 20px; }
.sys:nth-child(3) { margin-right: 2px; }
.app-ic { width: 62px; position: relative; }
.app-ic svg { width: 30px; height: 30px; }
.app-ic.run::after { content: ""; position: absolute; bottom: 0; left: 6px; right: 6px; height: 3px; background: #7fe6ea; }
.app-ic.act { background: #3b3b3b; }
.app-ic.act::after { left: 0; right: 0; }
.tray { margin-left: auto; display: flex; align-items: center; padding-right: 21px; }
.batt { position: relative; width: 61px; height: 25px; border: 2px solid #fff; background: #12a04a; font-size: 16px; line-height: 20px; text-align: center; margin-right: 10px; }
.batt::after { content: ""; position: absolute; right: -4px; top: 5px; width: 2px; height: 11px; background: #fff; }
.plug { width: 10px; height: 18px; margin-right: 30px; }
.people { width: 18px; height: 18px; margin-right: 28px; }
.tray .up { width: 16px; height: 9px; margin-right: 14px; }
.wifi { width: 16px; height: 15px; margin-right: 11px; }
.vol { width: 20px; height: 16px; margin-right: 14px; }
.lang { margin-right: 18px; }
.clock { text-align: center; margin-right: 23px; }
.note { position: relative; width: 30px; height: 30px; }
.note svg { width: 20px; height: 20px; }
.note em { position: absolute; right: 0; bottom: 0; width: 21px; height: 21px; border-radius: 50%; background: #333; border: 1px solid #888; font: 14px/19px "Open Sans", sans-serif; text-align: center; }
</style>
